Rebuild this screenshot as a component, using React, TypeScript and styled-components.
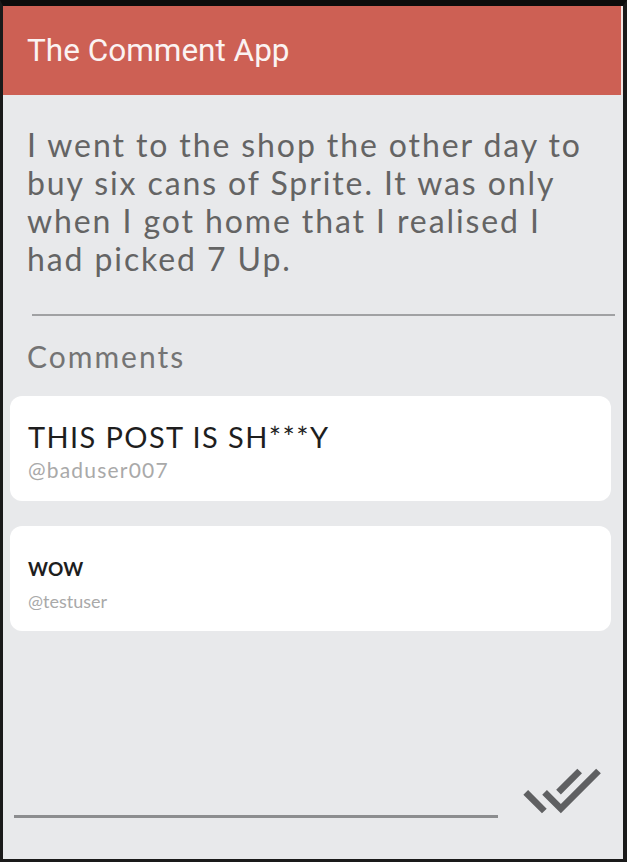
import React from "react";
import styled, { createGlobalStyle } from "styled-components";

const Global = createGlobalStyle`
  html, body { margin: 0; padding: 0; background: #ffffff; }
  * { box-sizing: border-box; }
`;

const Screen = styled.div`
  width: 627px;
  height: 862px;
  border-top: 6px solid #0c0c0c;
  border-left: 3px solid #1a1a1a;
  border-right: 4px solid #1a1a1a;
  border-bottom: 3px solid #1a1a1a;
  background: #e8e9eb;
  display: flex;
  flex-direction: column;
  overflow: hidden;
`;

const Header = styled.header`
  height: 89px;
  background: #cd6054;
  display: flex;
  align-items: center;
  padding: 0 0 0 24px;
  border-right: 2px solid #f2e4e2;
`;

const Title = styled.h1`
  margin: 0;
  font-family: Roboto, "Noto Sans", sans-serif;
  font-weight: 400;
  font-size: 31.5px;
  color: #fbf3f2;
  letter-spacing: 0;
`;

const Post = styled.p`
  margin: 0;
  padding: 31px 30px 0 24px;
  font-family: Lato, "Noto Sans", sans-serif;
  font-size: 32px;
  line-height: 38px;
  letter-spacing: 1.9px;
  color: #646464;
  height: 219px;
`;

const Divider = styled.hr`
  margin: 0 8px 0 29px;
  border: none;
  border-top: 2px solid #a0a1a3;
`;

const SectionLabel = styled.h2`
  margin: 0;
  padding: 22px 0 0 24px;
  font-family: Lato, "Noto Sans", sans-serif;
  font-weight: 400;
  font-size: 30px;
  line-height: 36px;
  letter-spacing: 2px;
  color: #747474;
`;

const CommentList = styled.div`
  display: flex;
  flex-direction: column;
  gap: 25px;
  padding: 22px 12px 0 7px;
`;

const Card = styled.div<{ $big?: boolean }>`
  background: #ffffff;
  border-radius: 12px;
  height: 105px;
  padding: 0 18px;
  display: flex;
  flex-direction: column;
  justify-content: center;
  gap: ${(p) => (p.$big ? "6px" : "10px")};
`;

const CommentText = styled.div<{ $big?: boolean }>`
  font-family: Lato, "Noto Sans", sans-serif;
  font-size: ${(p) => (p.$big ? "29px" : "19px")};
  font-weight: ${(p) => (p.$big ? 400 : 700)};
  line-height: ${(p) => (p.$big ? "32px" : "22px")};
  letter-spacing: ${(p) => (p.$big ? "1.4px" : "0.3px")};
  color: #1e1e1e;
  padding-top: ${(p) => (p.$big ? "4px" : "12px")};
`;

const Author = styled.div<{ $big?: boolean }>`
  font-family: Lato, "Noto Sans", sans-serif;
  font-size: ${(p) => (p.$big ? "21px" : "18px")};
  line-height: 22px;
  letter-spacing: ${(p) => (p.$big ? "1.2px" : "0")};
  color: #a9a9a9;
`;

const Spacer = styled.div`
  flex: 1;
`;

const Footer = styled.div`
  display: flex;
  align-items: flex-end;
  padding: 0 20px 40px 11px;
  gap: 22px;
`;

const InputLine = styled.div`
  flex: 1;
  height: 3px;
  background: #8c8d8f;
  margin-bottom: 1px;
  max-width: 484px;
`;

const SendButton = styled.button`
  border: none;
  background: transparent;
  padding: 0;
  margin: 0 0 0 auto;
  width: 82px;
  height: 82px;
  display: flex;
  align-items: center;
  justify-content: center;
  position: relative;
  top: 12px;
`;

const DoneAll = () => (
  <svg width="80" height="80" viewBox="0 0 24 24" fill="#5f6062">
    <path d="M18 7l-1.41-1.41-6.34 6.34 1.41 1.41L18 7zm4.24-1.41L11.66 16.17 7.48 12l-1.41 1.41L11.66 19l12-12-1.42-1.41zM.41 13.41L6 19l1.41-1.41L1.83 12 .41 13.41z" />
  </svg>
);

export default function App() {
  return (
    <>
      <Global />
      <Screen>
        <Header>
          <Title>The Comment App</Title>
        </Header>
        <Post>
          I went to the shop the other day to buy six cans of Sprite. It was only when I got home that I realised I had picked 7 Up.
        </Post>
        <Divider />
        <SectionLabel>Comments</SectionLabel>
        <CommentList>
          <Card $big>
            <CommentText $big>THIS POST IS SH***Y</CommentText>
            <Author $big>@baduser007</Author>
          </Card>
          <Card>
            <CommentText>WOW</CommentText>
            <Author>@testuser</Author>
          </Card>
        </CommentList>
        <Spacer />
        <Footer>
          <InputLine />
          <SendButton aria-label="send">
            <DoneAll />
          </SendButton>
        </Footer>
      </Screen>
    </>
  );
}
